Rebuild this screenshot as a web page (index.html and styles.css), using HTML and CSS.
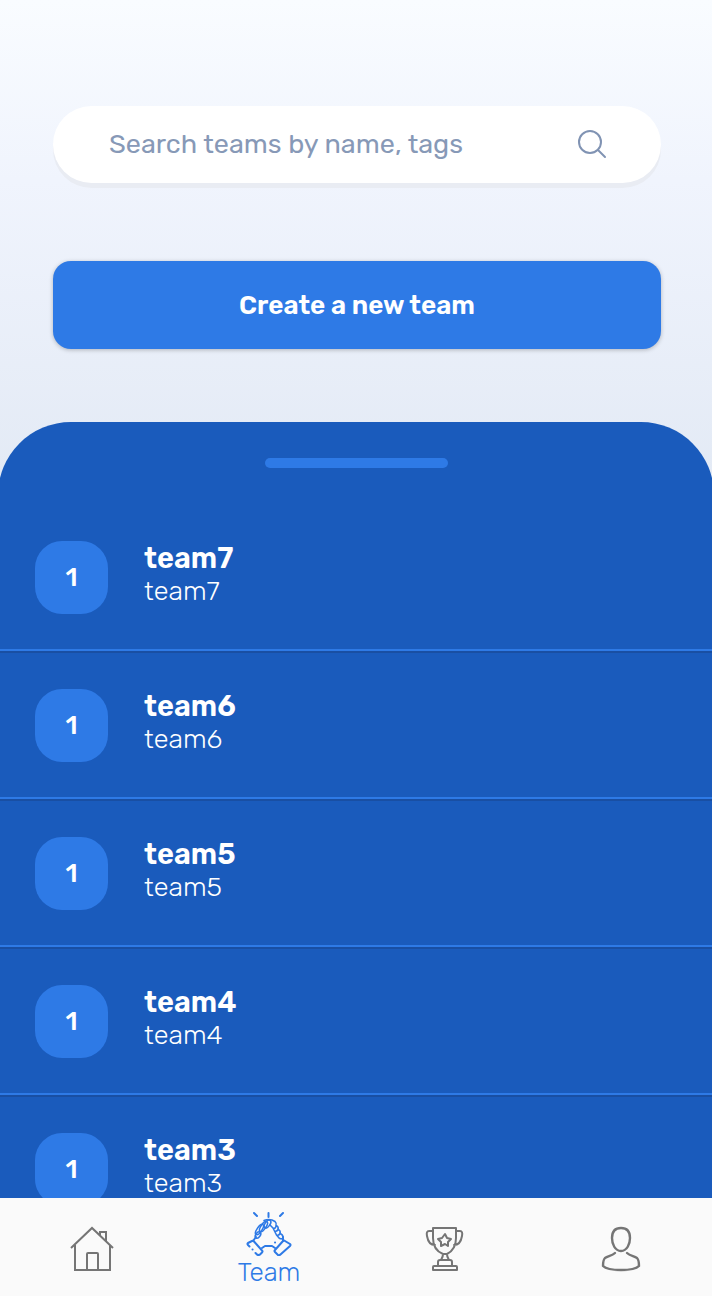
FILE: index.html
```html
<!DOCTYPE html>
<html lang="en">
<head>
  <meta charset="UTF-8" />
  <meta name="viewport" content="width=device-width, initial-scale=1.0"/>
  <title>Teams</title>
  <link rel="stylesheet" href="styles.css">
</head>
<body>
  <main>
    <div class="top">
      <form class="search" role="search">
        <input type="text" id="search" aria-label="Search teams" placeholder="Search teams by name, tags" />
        <button type="submit" aria-label="Search">
          <svg width="30" height="30" viewBox="0 0 30 30"><circle cx="13" cy="13" r="11"/><path d="M21 21l7 7"/></svg>
        </button>
      </form>
      <button type="button" class="create">Create a new team</button>
    </div>

    <section class="sheet">
      <div class="handle"></div>
      <ul class="teams">
        <li>
          <span class="count">1</span>
          <div class="info"><h2>team7</h2><p>team7</p></div>
        </li>
        <li>
          <span class="count">1</span>
          <div class="info"><h2>team6</h2><p>team6</p></div>
        </li>
        <li>
          <span class="count">1</span>
          <div class="info"><h2>team5</h2><p>team5</p></div>
        </li>
        <li>
          <span class="count">1</span>
          <div class="info"><h2>team4</h2><p>team4</p></div>
        </li>
        <li>
          <span class="count">1</span>
          <div class="info"><h2>team3</h2><p>team3</p></div>
        </li>
      </ul>
    </section>
  </main>

  <nav>
    <a href="#home" aria-label="Home">
      <svg class="thin" width="46" height="46" viewBox="0 0 46 46">
        <path d="M1 22L22 2l21 20M5 19v25h35V19M17 44V28q0-1 1-1h9q1 0 1 1v16M30 9V6h6v9"/>
      </svg>
    </a>
    <a href="#team" class="active">
      <svg width="46" height="46" viewBox="4 2 46 46">
        <!-- sparks -->
        <path d="M12 5l3 3M26.5 5v4M41 5l-3 3"/>
        <!-- clasped fingers -->
        <g stroke-width="1.6">
          <ellipse cx="16" cy="27" rx="3.5" ry="2.2" transform="rotate(-55 16 27)"/>
          <ellipse cx="17.500" cy="21.5" rx="6" ry="2.4" transform="rotate(-55 17.5 21.5)"/>
          <ellipse cx="21.5" cy="18.500" rx="6" ry="2.4" transform="rotate(-55 21.5 18.5)"/>
          <ellipse cx="25.5" cy="16" rx="4.5" ry="2.4" transform="rotate(-55 25.5 16)"/>
          <path d="M22 12.500c4-1.500 8-1 11 1q2 2 1 4 3 1 2 4 3 1 2 4 3 1 3 4-1 2-3 1M28 17l3 3q3 1 3-2.500M31 20l1.500 3q2 1 3.500-1.500M32.500 23l2 4q2 1 3.500-1.500M34.500 27l3 3.500"/>
        </g>
        <!-- forearms and cuffs -->
        <path d="M14 29l-3 4M20 40l3-2h7l3 2M41 29v4"/>
        <path d="M7.5 38.500L6 37q-1-1 0-2l4-2q1-.5 2 .5l8 9q1 1 0 2l-2 2q-1 1-3 0l-1.500-1.500M10.500 41.500h.1"/>
        <path d="M41 33q1-1 2 0l5 3q1 1 0 2l-9 8q-2 2-3 1l-3-3q-1-1 0-2zM33 34.500h.1"/>
      </svg>
      <span>Team</span>
    </a>
    <a href="#ranking" aria-label="Ranking">
      <svg width="46" height="46" viewBox="0 0 46 46">
        <path d="M11 2h23v10c0 9-5 14-9 16h-4c-5-2-10-7-10-16zM11 5H7q-3 0-2 5c1 6 4 9 8 9M34 5h4q3 0 2 5c-1 6-4 9-8 9M21 28c0 3-1 4-2 6M25 28c0 3 1 4 2 6M16 40v-4q0-2 2-2h10q2 0 2 2v4M12 40h22q1 0 1 1v3H11v-3q0-1 1-1z"/>
        <path d="M23 8l2 4 4 1-3 3v4l-3-2-4 2v-4l-3-3 4-1z"/>
      </svg>
    </a>
    <a href="#profile" aria-label="Profile">
      <svg width="46" height="46" viewBox="0 0 46 46">
        <path d="M23 2c6 0 9 4 9 10s-3 13-9 13-9-7-9-13 3-10 9-10zM17 27c-3 3-7 3-10 5-2 2-2 5-2 8 3 3 10 4 18 4s15-1 18-4c0-3 0-6-2-8-3-2-7-2-10-5" stroke-width="2.4"/>
      </svg>
    </a>
  </nav>
</body>
</html>
```
FILE: styles.css
```css
* {
  box-sizing: border-box;
}
body {
  margin: 0;
  height: 100vh;
  display: flex;
  flex-direction: column;
  font-family: Rubik, Inter, sans-serif;
  background: linear-gradient(#f9fcff, #f0f4fd 180px, #e3eaf5 480px);
}
h2, p, ul {
  margin: 0;
  padding: 0;
}
button, input {
  font-family: inherit;
  border: 0;
  padding: 0;
}
svg {
  display: block;
  fill: none;
  stroke: currentColor;
  stroke-linecap: round;
  stroke-linejoin: round;
}
a, button {
  stroke-width: 2;
}
main {
  flex: 1;
  min-height: 0;
  display: flex;
  flex-direction: column;
  overflow: hidden;
}
.top {
  padding: 106px 51px 73px 53px;
}
.search {
  display: flex;
  align-items: center;
  height: 77px;
  padding: 0 54px 2px 56px;
  margin-bottom: 78px;
  border-radius: 39px;
  background: #fff;
  box-shadow: 0 5px #e9ecf3;
}
.search input {
  flex: 1;
  min-width: 0;
  background: none;
  font-size: 27px;
  outline: none;
}
.search input::placeholder {
  color: #8799b7;
  opacity: 1;
}
.search button {
  background: none;
  color: #8093b3;
}
.create {
  display: block;
  width: 100%;
  height: 88px;
  border-radius: 18px;
  background: #2e7ae6;
  color: #fff;
  font-size: 26px;
  font-weight: 600;
  box-shadow: 0 1px 4px rgba(0, 0, 0, 0.25);
}
.sheet {
  flex: 1;
  min-height: 0;
  margin: 0 -2px;
  padding: 36px 2px 0;
  border-radius: 73px 73px 0 0;
  background: #1a5bbc;
  color: #fff;
  overflow-y: auto;
  scrollbar-width: none;
}
.handle {
  width: 183px;
  height: 10px;
  margin: 0 auto 35px;
  border-radius: 5px;
  background: #2e7ae6;
}
.teams {
  list-style: none;
}
.teams li {
  display: flex;
  align-items: flex-start;
  height: 148px;
  padding: 38px 35px 0;
  border-bottom: 2px solid #2e7ae6;
  box-shadow: 0 2px #194fa3;
}
.count {
  width: 73px;
  height: 73px;
  margin-right: 36px;
  border-radius: 27px;
  background: #2e7ae6;
  line-height: 73px;
  text-align: center;
  font-size: 26px;
  font-weight: 500;
}
.info h2 {
  font-size: 29px;
  font-weight: 600;
  line-height: 35px;
}
.info p {
  font-size: 27px;
  font-weight: 300;
  line-height: 31px;
}
nav {
  display: flex;
  height: 98px;
  padding: 0 3px 0 5px;
  background: #fafafa;
}
nav a {
  flex: 1;
  display: flex;
  flex-direction: column;
  align-items: center;
  justify-content: center;
  padding-top: 4px;
  color: #757575;
  font-size: 26px;
  font-weight: 300;
  line-height: 30px;
  text-decoration: none;
}
nav span {
  padding-top: 2px;
}
nav .active {
  color: #2e7ae6;
}
nav .thin {
  stroke-linecap: butt;
  stroke-linejoin: miter;
}
```
